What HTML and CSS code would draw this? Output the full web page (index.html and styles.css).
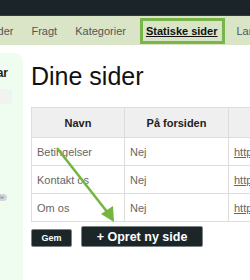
FILE: index.html
```html
<!DOCTYPE html>
<html lang="da">
<head>
    <meta charset="UTF-8">
    <title>Statiske sider</title>
    <link rel="stylesheet" href="styles.css">
</head>
<body>
    <div id="topbar"></div>

    <nav id="menu">
        <a class="menu-item">Kunder</a>
        <a class="menu-item">Fragt</a>
        <a class="menu-item">Kategorier</a>
        <a class="menu-item active">Statiske sider</a>
        <a class="menu-item">Lande</a>
    </nav>

    <div id="page">
        <div id="sidebar">
            <h3>Sidebar</h3>
            <div class="search-box"></div>
            <span class="badge">side</span>
        </div>

        <div id="main">
            <h1>Dine sider</h1>
            <table class="pages">
                <tr>
                    <th class="col-name">Navn</th>
                    <th class="col-front">På forsiden</th>
                    <th class="col-url"></th>
                </tr>
                <tr>
                    <td>Betingelser</td>
                    <td>Nej</td>
                    <td><a>http://shop.dk/betingelser</a></td>
                </tr>
                <tr>
                    <td>Kontakt os</td>
                    <td>Nej</td>
                    <td><a>http://shop.dk/kontakt</a></td>
                </tr>
                <tr>
                    <td>Om os</td>
                    <td>Nej</td>
                    <td><a>http://shop.dk/om-os</a></td>
                </tr>
            </table>

            <div class="actions">
                <button class="btn btn-small">Gem</button>
                <button class="btn btn-big">+ Opret ny side</button>
            </div>
        </div>
    </div>

    <!-- hint arrow pointing at the create button -->
    <svg class="hint-arrow" width="250" height="280" viewBox="0 0 250 280">
        <line x1="57" y1="148" x2="108" y2="213" stroke="#72b53f" stroke-width="2.5"/>
        <polygon points="114,222 101,214 113,206" fill="#72b53f"/>
    </svg>
</body>
</html>
```

FILE: styles.css
```css
body {
    margin: 0;
    width: 250px;
    height: 280px;
    overflow: hidden;
    position: relative;
    font-family: "Liberation Sans", Arial, sans-serif;
    background-color: #fff;
}
#topbar {
    height: 15px;
    background-color: #1b2428;
    border-bottom: 1px solid #2f3b33;
}
#menu {
    display: flex;
    align-items: center;
    height: 29px;
    background-color: #d9e5c6;
    white-space: nowrap;
    margin-left: -31px;
    font-size: 11px;
}
.menu-item {
    padding: 0 9px;
    color: #555;
}
.active {
    margin: 0 2px 0 5px;
    padding: 4px 5px 4px 3px;
    border: 3px solid #79b649;
    color: #111;
    font-weight: bold;
    text-decoration: underline;
}
#page {
    display: flex;
    margin-top: 8px;
}
#sidebar {
    flex: none;
    width: 150px;
    margin-left: -127px;
    height: 240px;
    background-color: #eefdf0;
    border-top-right-radius: 9px;
    display: flex;
    flex-direction: column;
    align-items: flex-end;
}
#sidebar h3 {
    margin: 13px 15px 0 0;
    font-size: 12px;
    line-height: 14px;
    color: #222;
}
.search-box {
    width: 60px;
    height: 15px;
    margin: 9px 11px 0 0;
    background-color: #f1f3f1;
    border-radius: 3px;
}
.badge {
    margin: 90px 16px 0 0;
    padding: 0 3px;
    font-size: 6px;
    line-height: 7px;
    background-color: #d6d6d6;
    color: #888;
    border-radius: 4px;
}
#main {
    flex: none;
    padding: 8px 0 0 8px;
}
h1 {
    margin: 0 0 16px;
    font-size: 25px;
    line-height: 30px;
    font-weight: normal;
    color: #111;
}
.pages {
    border-collapse: collapse;
    border: 1px solid #ddd;
    font-size: 11px;
    white-space: nowrap;
}
.pages th {
    height: 29px;
    padding: 0;
    background-color: #efefef;
    color: #222;
    border: 1px solid #ddd;
}
.pages td {
    height: 27px;
    padding: 0 5px;
    color: #666;
    border: 1px solid #ddd;
}
.col-name { width: 92px; }
.col-front { width: 103px; }
.col-url { width: 150px; }
.pages a {
    color: #666;
    text-decoration: underline;
}
.actions {
    display: flex;
    align-items: flex-end;
    gap: 9px;
    margin-top: 4px;
}
.btn {
    background-color: #1c2628;
    color: #fff;
    font-family: "Liberation Sans", Arial, sans-serif;
    font-weight: bold;
    border: 1px solid #7c8486;
    border-radius: 2px;
    margin: 0;
}
.btn-small {
    width: 41px;
    height: 18px;
    padding: 0;
    font-size: 9px;
}
.btn-big {
    width: 122px;
    height: 21px;
    padding: 0;
    font-size: 12.5px;
}
.hint-arrow {
    position: absolute;
    left: 0;
    top: 0;
    pointer-events: none;
}
```
